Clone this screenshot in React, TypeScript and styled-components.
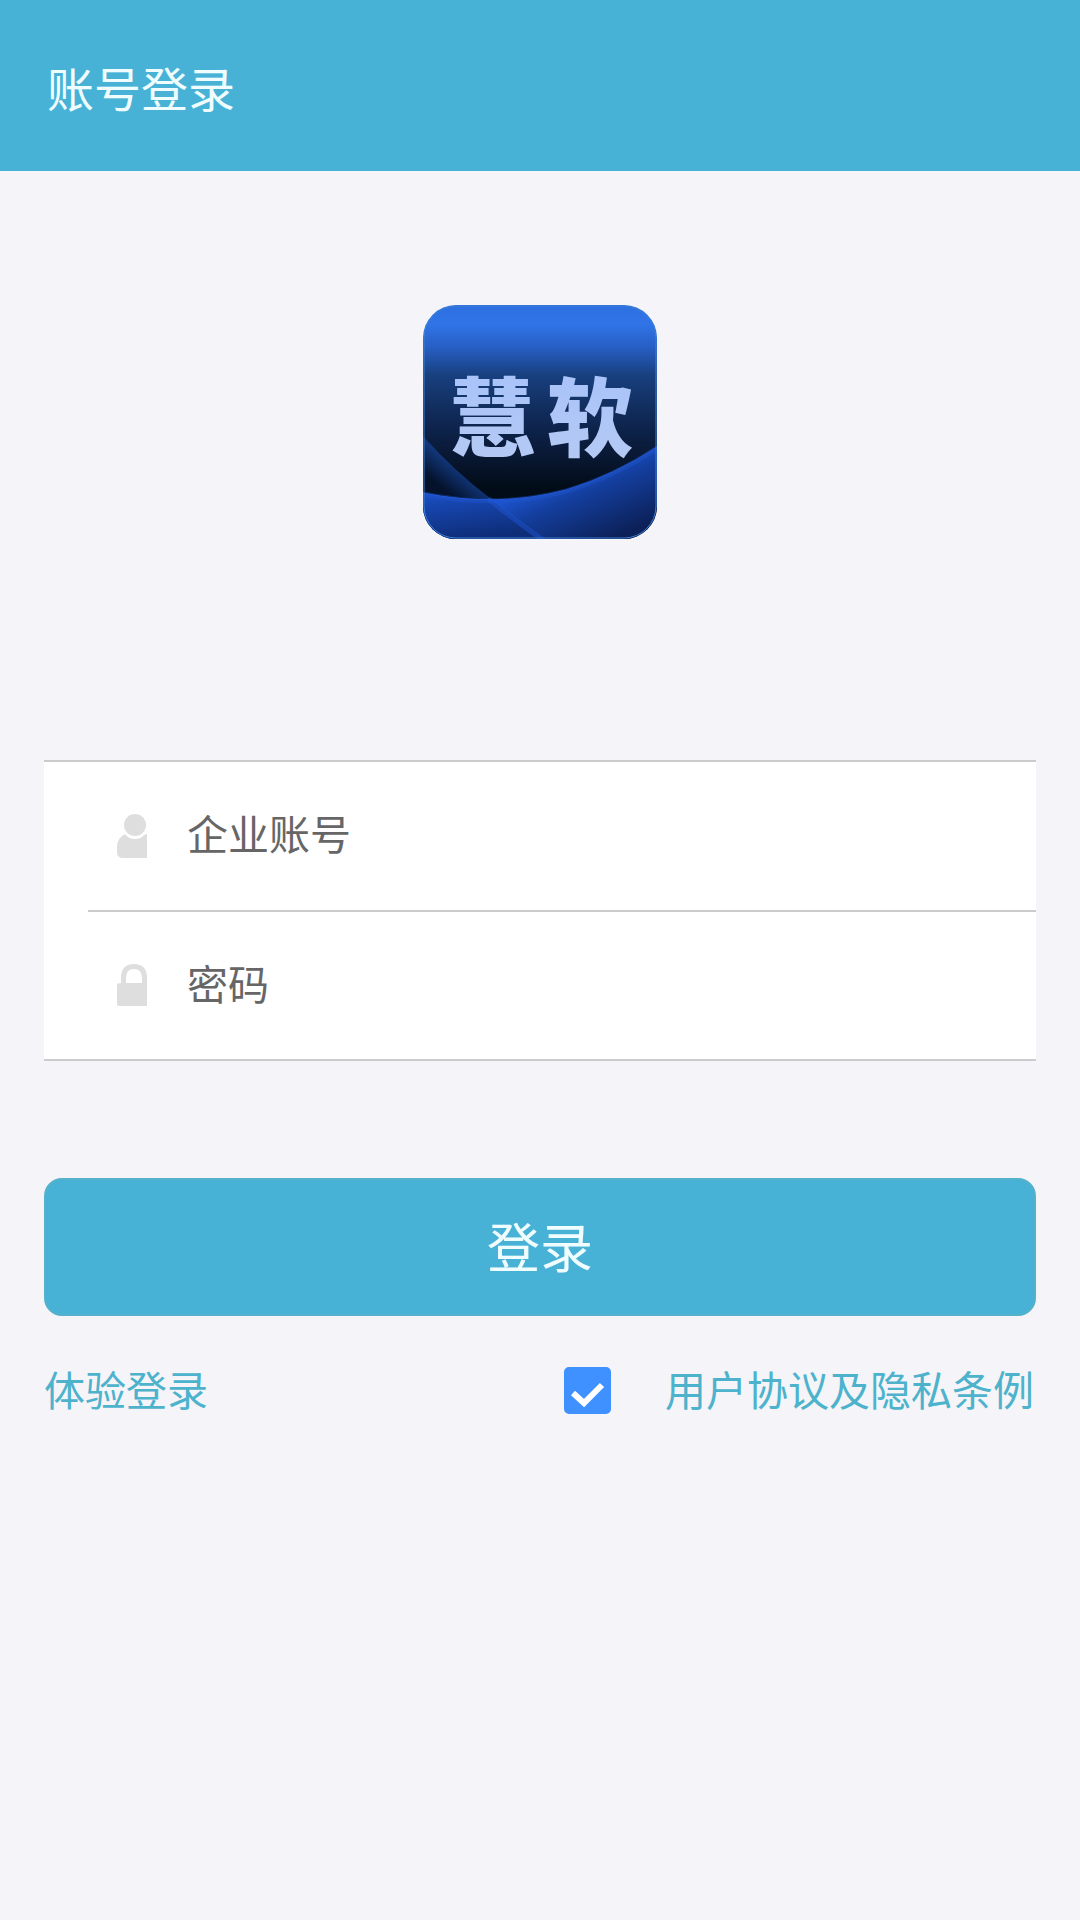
import React, { useState } from "react";
import styled, { createGlobalStyle } from "styled-components";

const colors = {
  brand: "#47b2d6",
  page: "#f4f4f9",
  line: "#cbcbcd",
  link: "#4db2cb",
  check: "#3e91ff",
};

const GlobalStyle = createGlobalStyle`
  *, *::before, *::after {
    box-sizing: border-box;
  }
  body {
    margin: 0;
    background: ${colors.page};
    font-family: "Noto Sans CJK SC", "Noto Sans", sans-serif;
  }
`;

const Page = styled.div`
  display: flex;
  flex-direction: column;
  min-height: 100vh;
`;

const Header = styled.header`
  padding: 52px 47px 49px;
  background: ${colors.brand};
`;

const Title = styled.h1`
  margin: 0;
  color: #f0fdff;
  font-size: 47px;
  font-weight: 400;
  line-height: 70px;
`;

const Main = styled.main`
  display: flex;
  flex-direction: column;
  padding: 134px 44px 0;
`;

const Logo = styled.svg`
  display: block;
  align-self: center;
  width: 234px;
  height: 234px;
`;

const LoginForm = styled.form`
  display: flex;
  flex-direction: column;
  margin-top: 221px;
`;

const Fields = styled.div`
  background: #fff;
  border-top: 2px solid ${colors.line};
  border-bottom: 2px solid ${colors.line};
`;

const Field = styled.div<{ $divided?: boolean }>`
  display: flex;
  align-items: center;
  gap: 40px;
  height: ${(p) => (p.$divided ? 150 : 147)}px;
  margin-left: 44px;
  padding-left: 29px;
  border-bottom: ${(p) => (p.$divided ? `2px solid ${colors.line}` : "none")};
`;

const FieldIcon = styled.label`
  display: flex;
  color: #dedede;
`;

const FieldInput = styled.input`
  flex: 1;
  min-width: 0;
  height: 100%;
  padding: 0 0 8px;
  border: 0;
  outline: 0;
  background: transparent;
  color: #333;
  font: inherit;
  font-size: 41px;

  &::placeholder {
    color: #666;
    opacity: 1;
  }
`;

const SubmitButton = styled.button`
  height: 138px;
  margin-top: 117px;
  padding: 0 0 4px;
  border: 2px solid #55b1cb;
  border-radius: 18px;
  background: ${colors.brand};
  color: #f0fdff;
  font: inherit;
  font-size: 53px;
  cursor: pointer;
`;

const Options = styled.div`
  display: flex;
  align-items: center;
  justify-content: space-between;
  margin-top: 42px;
  padding-right: 2px;
`;

const Agreement = styled.div`
  display: flex;
  align-items: center;
  gap: 54px;
`;

const TextLink = styled.a`
  padding-bottom: 4px;
  color: ${colors.link};
  font-size: 41px;
  line-height: 60px;
  text-decoration: none;
`;

const CheckBox = styled.span`
  display: grid;

  & > * {
    grid-area: 1 / 1;
  }
`;

const CheckInput = styled.input`
  appearance: none;
  width: 47px;
  height: 47px;
  margin: 0;
  border: 2px solid ${colors.check};
  border-radius: 5px;
  background: #fff;

  &:checked {
    background: ${colors.check};
  }
`;

const CheckMark = styled.svg`
  width: 47px;
  height: 47px;
  pointer-events: none;
`;

function AppLogo() {
  return (
    <Logo viewBox="0 0 234 234" role="img" aria-label="慧软">
      <defs>
        <clipPath id="tile">
          <rect width="234" height="234" rx="33" />
        </clipPath>
        <linearGradient id="sky" x1="0" y1="0" x2="0" y2="1">
          <stop offset="0" stopColor="#2c6fe0" />
          <stop offset="0.08" stopColor="#3074e8" />
          <stop offset="0.18" stopColor="#275fc4" />
          <stop offset="0.3" stopColor="#18407f" />
          <stop offset="0.45" stopColor="#112c5c" />
          <stop offset="0.62" stopColor="#0a1a38" />
          <stop offset="0.78" stopColor="#020c18" />
          <stop offset="1" stopColor="#020c18" />
        </linearGradient>
        <linearGradient id="wave" gradientUnits="userSpaceOnUse" x1="120" y1="180" x2="150" y2="250">
          <stop offset="0" stopColor="#1c52cc" />
          <stop offset="0.3" stopColor="#143f9f" />
          <stop offset="1" stopColor="#0c2159" />
        </linearGradient>
        <linearGradient id="corner" x1="0" y1="0" x2="0.3" y2="1">
          <stop offset="0" stopColor="#1a4fc4" />
          <stop offset="1" stopColor="#0e2d78" />
        </linearGradient>
        <linearGradient id="streak" gradientUnits="userSpaceOnUse" x1="36" y1="164" x2="20" y2="184">
          <stop offset="0" stopColor="#12377c" />
          <stop offset="1" stopColor="#04122b" />
        </linearGradient>
        <linearGradient id="ink" x1="0" y1="0" x2="0" y2="1">
          <stop offset="0" stopColor="#a6c1fb" />
          <stop offset="1" stopColor="#b6cbf3" />
        </linearGradient>
      </defs>
      <g clipPath="url(#tile)">
        <rect width="234" height="234" fill="url(#sky)" />
        <path d="M0 131Q30 165 68 194L0 190Z" fill="url(#streak)" />
        <path d="M0 188Q75 203 143 185Q192 170 234 142V234H0Z" fill="url(#wave)" />
        <path d="M0 188Q34 195 68 194Q92 214 121 234H0Z" fill="url(#corner)" />
        <g fill="none" stroke="#2158d6" strokeLinecap="round">
          <path d="M0 189Q75 204 143 186Q192 171 234 143" strokeWidth="5" opacity="0.35" />
          <path d="M0 188Q75 203 143 185Q192 170 234 142" strokeWidth="1" />
          <path d="M67 195Q91 215 120 235" strokeWidth="5" opacity="0.45" />
        </g>
        <rect x="1" y="1" width="232" height="232" rx="32" fill="none" stroke="#3f7fd0" strokeWidth="1" />
      </g>
      <g
        fill="url(#ink)"
        fontFamily="'Noto Sans CJK SC', sans-serif"
        fontWeight="900"
        fontSize="86"
        textAnchor="middle"
      >
        <text x="69" y="145">慧</text>
        <text x="167" y="145">软</text>
      </g>
    </Logo>
  );
}

function UserIcon() {
  return (
    <svg width="30" height="44" viewBox="0 0 30 44" fill="currentColor" aria-hidden="true">
      <circle cx="18" cy="11" r="11" />
      <path d="M8 20Q11 25 18 25Q24 25 27 21L30 20V44H6Q0 44 0 38V33Q0 24 8 20Z" />
    </svg>
  );
}

function LockIcon() {
  return (
    <svg width="30" height="44" viewBox="0 0 30 44" fill="currentColor" aria-hidden="true">
      <path
        fillRule="evenodd"
        d="M4 19V14Q4 0 17 0Q30 0 30 14V42H2Q0 42 0 40V21Q0 19 4 19ZM9 19H25V14Q25 5 17 5Q9 5 9 14Z"
      />
    </svg>
  );
}

export default function App() {
  const [agreed, setAgreed] = useState(true);

  return (
    <>
      <GlobalStyle />
      <Page>
        <Header>
          <Title>账号登录</Title>
        </Header>
        <Main>
          <AppLogo />
          <LoginForm onSubmit={(e) => e.preventDefault()}>
            <Fields>
              <Field $divided>
                <FieldIcon htmlFor="account">
                  <UserIcon />
                </FieldIcon>
                <FieldInput id="account" type="text" placeholder="企业账号" aria-label="企业账号" />
              </Field>
              <Field>
                <FieldIcon htmlFor="password">
                  <LockIcon />
                </FieldIcon>
                <FieldInput id="password" type="password" placeholder="密码" aria-label="密码" />
              </Field>
            </Fields>
            <SubmitButton type="submit">登录</SubmitButton>
            <Options>
              <TextLink href="#trial">体验登录</TextLink>
              <Agreement>
                <CheckBox>
                  <CheckInput
                    type="checkbox"
                    checked={agreed}
                    onChange={(e) => setAgreed(e.target.checked)}
                    aria-labelledby="terms"
                  />
                  {agreed && (
                    <CheckMark viewBox="0 0 47 47" aria-hidden="true">
                      <path d="M9 26L20 36L38 18" fill="none" stroke="#fff" strokeWidth="6" />
                    </CheckMark>
                  )}
                </CheckBox>
                <TextLink id="terms" href="#terms">
                  用户协议及隐私条例
                </TextLink>
              </Agreement>
            </Options>
          </LoginForm>
        </Main>
      </Page>
    </>
  );
}
